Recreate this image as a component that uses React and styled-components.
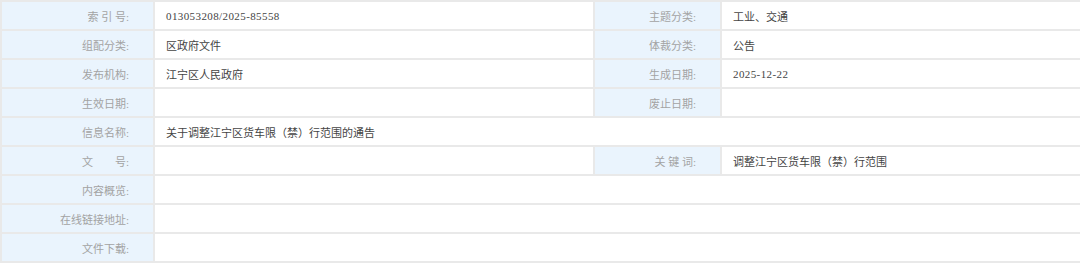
import React from "react";
import styled, { createGlobalStyle } from "styled-components";

const GlobalStyle = createGlobalStyle`
  html, body {
    margin: 0;
    padding: 0;
    background: #fff;
    overflow: hidden;
  }
`;

const Table = styled.div`
  width: 1082px;
  display: grid;
  grid-template-columns: 151px 438px 125px 1fr;
  grid-auto-rows: 27px;
  gap: 2px;
  padding: 2px;
  box-sizing: border-box;
  background: #e9e9e9;
  font-family: "Liberation Serif", "Noto Sans CJK SC", serif;
  font-size: 11px;
`;

const Label = styled.div`
  background: #eaf4fd;
  color: #a3a3a3;
  display: flex;
  align-items: center;
  justify-content: flex-end;
  padding-right: 24px;
  white-space: pre;
`;

const Value = styled.div`
  background: #fff;
  color: #444;
  display: flex;
  align-items: center;
  padding-left: 11px;
  grid-column: ${(p) => (p.$wide ? "2 / 5" : "auto")};
  letter-spacing: ${(p) => (p.$num ? "0.4px" : "0")};
  white-space: pre;
`;

const rows = [
  [["索 引 号:", "013053208/2025-85558"], ["主题分类:", "工业、交通"]],
  [["组配分类:", "区政府文件"], ["体裁分类:", "公告"]],
  [["发布机构:", "江宁区人民政府"], ["生成日期:", "2025-12-22"]],
  [["生效日期:", ""], ["废止日期:", ""]],
  [["信息名称:", "关于调整江宁区货车限（禁）行范围的通告"]],
  [["文　　号:", ""], ["关 键 词:", "调整江宁区货车限（禁）行范围"]],
  [["内容概览:", ""]],
  [["在线链接地址:", ""]],
  [["文件下载:", ""]],
];

export default function App() {
  return (
    <>
      <GlobalStyle />
      <Table>
        {rows.map((row, i) =>
          row.map(([label, value], j) => (
            <React.Fragment key={`${i}-${j}`}>
              <Label>{label}</Label>
              <Value $wide={row.length === 1} $num={/^[\d/-]+$/.test(value)}>
                {value}
              </Value>
            </React.Fragment>
          ))
        )}
      </Table>
    </>
  );
}
